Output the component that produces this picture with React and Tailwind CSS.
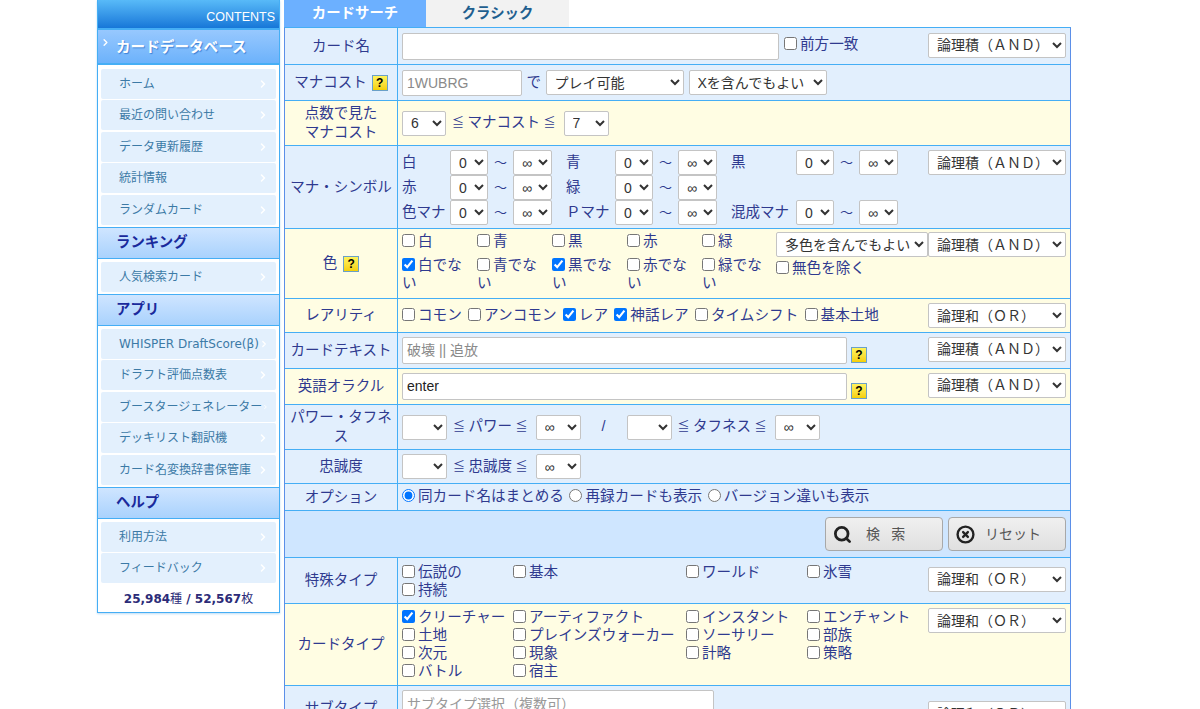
import { ChevronRight, Search, CircleX } from "lucide-react";

const JP = "font-['Liberation_Sans','Noto_Sans_CJK_JP',sans-serif]";
const blue = "bg-[#e2effd]";
const yellow = "bg-[#fffde3]";

const sections = [
  { title: "ランキング", items: ["人気検索カード"] },
  {
    title: "アプリ",
    items: [
      "WHISPER DraftScore(β)",
      "ドラフト評価点数表",
      "ブースタージェネレーター",
      "デッキリスト翻訳機",
      "カード名変換辞書保管庫",
    ],
  },
  { title: "ヘルプ", items: ["利用方法", "フィードバック"] },
];

function NavItem({ label }) {
  return (
    <div className="flex h-[30px] items-center justify-between rounded-[2px] bg-[#e3f0fd] pl-[18px] pr-[7px] text-[12px] text-[#3c7aa6]">
      <span className="whitespace-nowrap">{label}</span>
      <ChevronRight size={12} className="text-white" strokeWidth={3} />
    </div>
  );
}

function NavList({ items, top = "pt-[3px]" }) {
  return (
    <div className={`flex flex-col gap-[1.4px] px-[3px] pb-[2px] ${top}`}>
      {items.map((i) => (
        <NavItem key={i} label={i} />
      ))}
    </div>
  );
}

function Sidebar() {
  return (
    <div className="w-[183px] shrink-0 self-start border-x border-b border-[#45aef5] bg-white font-['DejaVu_Sans','Noto_Sans_CJK_JP',sans-serif] shadow-[0_1px_2px_#bcdcf5]">
      <div className="flex h-[28px] items-end justify-end bg-gradient-to-b from-[#58baf8] to-[#1677d8] pb-[1px] pr-[4px] font-['Liberation_Sans',sans-serif] text-[12.5px] text-white">
        CONTENTS
      </div>
      <div className="relative flex h-[37px] items-center border-y-2 border-[#45aef5] bg-gradient-to-b from-[#97c8fe] to-[#6cb2fb] pl-[18px] text-[14.6px] font-bold text-white [text-shadow:1px_1px_1px_#3b82d6]">
        <ChevronRight size={11} strokeWidth={3} className="absolute left-[2px] top-[7px] text-white" />
        カードデータベース
      </div>
      <NavList
        top="pt-[4px]"
        items={["ホーム", "最近の問い合わせ", "データ更新履歴", "統計情報", "ランダムカード"]}
      />
      {sections.map((s) => (
        <div key={s.title}>
          <div className="flex h-[32.2px] items-center border-y border-[#45aef5] bg-gradient-to-b from-[#cfe5ff] to-[#a9d2fd] pl-[18px] text-[14.4px] font-bold text-[#1a2a9c]">
            {s.title}
          </div>
          <NavList items={s.items} />
        </div>
      ))}
      <div className="flex h-[27px] items-center justify-center whitespace-nowrap text-[12px] font-bold text-[#2c2c78]">
        25,984<span className="font-normal">種</span>&nbsp;/&nbsp;52,567<span className="font-normal">枚</span>
      </div>
    </div>
  );
}

function Help() {
  return (
    <span className="inline-flex h-[16px] w-[16px] shrink-0 items-center justify-center border border-[#6aa0c8] bg-gradient-to-b from-[#fff45a] to-[#f5d000] text-[12px] font-bold leading-none text-black">
      ?
    </span>
  );
}

function Select({ w, value, options, className = "" }) {
  const opts = options ?? [value];
  return (
    <select
      defaultValue={value}
      style={{ width: w }}
      className={`h-[25px] shrink-0 rounded-[2px] border border-[#c4c4c4] bg-white pl-[4px] text-[14px] text-[#333] ${className}`}
    >
      {opts.map((o) => (
        <option key={o}>{o}</option>
      ))}
    </select>
  );
}

function Logic({ value = "論理積（ＡＮＤ）", className = "" }) {
  return <Select w={138} value={value} className={`ml-auto ${className}`} />;
}

function Check({ label, checked, type = "checkbox", name }) {
  return (
    <label className="pr-[2px] text-[14.6px]">
      <input
        type={type}
        name={name}
        defaultChecked={checked}
        className="mr-[3px] align-[-1px]"
      />
      {label}
    </label>
  );
}

function Row({ label, bg, h, labelBg, children, align = "items-center" }) {
  return (
    <div className={`flex border-b border-[#45aef5] ${bg}`} style={{ height: h }}>
      <div
        className={`flex w-[113px] shrink-0 items-center justify-center border-r border-[#45aef5] text-center leading-[19px] ${labelBg ?? ""}`}
      >
        {label}
      </div>
      <div className={`flex min-w-0 flex-1 pl-[4px] pr-[4px] ${align}`}>{children}</div>
    </div>
  );
}

function Le() {
  return <span className="text-[12px]">≦</span>;
}

function Between({ label }) {
  return (
    <span className="ml-[6px] mr-[8px] flex items-center gap-[3.5px] whitespace-nowrap">
      <Le />
      {label}
      <Le />
    </span>
  );
}

function Range({ a = "0", b = "∞" }) {
  return (
    <>
      <Select w={38} value={a} />
      <span className="w-[25px] text-center text-[13px]">～</span>
      <Select w={39} value={b} />
    </>
  );
}

function SymbolRow({ rows }) {
  return (
    <div className="flex h-[25px] items-center">
      {rows.map(([label, w, gap], i) => (
        <div key={label} className="flex items-center" style={{ marginLeft: i ? gap : 0 }}>
          <span className="whitespace-nowrap" style={{ width: w }}>
            {label}
          </span>
          <Range />
        </div>
      ))}
    </div>
  );
}

function CheckGrid({ cols, items }) {
  return (
    <div className="grid leading-[18px]" style={{ gridTemplateColumns: cols }}>
      {items.map(([l, c]) => (
        <Check key={l} label={l} checked={c} />
      ))}
    </div>
  );
}

function Tabs() {
  return (
    <div className="flex h-[27px] text-[14.4px] font-bold">
      <div className="flex w-[142px] items-center justify-center bg-[#6cb0ff] text-white">カードサーチ</div>
      <div className="flex w-[143px] items-center justify-center bg-[#f2f2f2] text-[#1f5f8f]">クラシック</div>
    </div>
  );
}

function ActionButton({ children, w }) {
  return (
    <button
      className="flex h-[34px] items-center rounded-[4px] border border-[#a8a8a8] bg-gradient-to-b from-[#f0f0f0] to-[#e0e0e0] pl-[7px] text-[14px] text-[#555]"
      style={{ width: w }}
    >
      {children}
    </button>
  );
}

export default function App() {
  return (
    <div className={`flex h-[709px] gap-[4px] overflow-hidden bg-white pl-[97px] text-[14.5px] text-[#2f3a8f] ${JP}`}>
      <Sidebar />
      <div className="w-[787px] shrink-0">
        <Tabs />
        <div className="border-x border-t border-x-[#5b8fe8] border-t-[#45aef5]">
          <Row label="カード名" bg={blue} h={37}>
            <input className="h-[27px] w-[377px] rounded-[2px] border border-[#c4c4c4] bg-white" />
            <span className="ml-[5px] -mt-[2px]">
              <Check label="前方一致" />
            </span>
            <Logic className="-mt-[2px]" />
          </Row>
          <Row
            label={
              <span className="flex items-center gap-[5px]">
                マナコスト <Help />
              </span>
            }
            bg={blue}
            h={36}
          >
            <input
              placeholder="1WUBRG"
              className="h-[26px] w-[120px] rounded-[2px] border border-[#c4c4c4] bg-white px-[4px] text-[14px] placeholder:text-[#8a8a8a]"
            />
            <span className="mx-[4.5px]">で</span>
            <Select w={138} value="プレイ可能" />
            <Select w={138} value="Xを含んでもよい" className="ml-[5px]" />
          </Row>
          <Row label={<>点数で見た<br />マナコスト</>} bg={yellow} h={45}>
            <Select w={44} value="6" />
            <Between label="マナコスト" />
            <Select w={45} value="7" />
          </Row>
          <Row label="マナ・シンボル" bg={blue} h={83} labelBg="whitespace-nowrap" align="items-start pt-[4px]">
            <div className="flex flex-col">
              <SymbolRow rows={[["白", 48, 0], ["青", 49, 14], ["黒", 65, 14]]} />
              <SymbolRow rows={[["赤", 48, 0], ["緑", 49, 14]]} />
              <SymbolRow rows={[["色マナ", 48, 0], ["Ｐマナ", 49, 14], ["混成マナ", 65, 14]]} />
            </div>
            <Logic />
          </Row>
          <Row
            label={
              <span className="flex items-center gap-[6px]">
                色 <Help />
              </span>
            }
            bg={yellow}
            h={70}
            align="items-start pt-[3px]"
          >
            <div className="w-[375px] shrink-0">
              <CheckGrid
                cols="repeat(5, 75px)"
                items={[["白"], ["青"], ["黒"], ["赤"], ["緑"]]}
              />
              <div className="mt-[6px]">
                <CheckGrid
                  cols="repeat(5, 75px)"
                  items={[["白でない", true], ["青でない"], ["黒でない", true], ["赤でない"], ["緑でない"]]}
                />
              </div>
            </div>
            <div className="-ml-[1px] flex flex-col">
              <Select w={152} value="多色を含んでもよい" />
              <span className="mt-[2px] leading-[18px]">
                <Check label="無色を除く" />
              </span>
            </div>
            <Logic />
          </Row>
          <Row label="レアリティ" bg={yellow} h={34}>
            <div className="flex gap-[4.3px] whitespace-nowrap">
              <Check label="コモン" />
              <Check label="アンコモン" />
              <Check label="レア" checked />
              <Check label="神話レア" checked />
              <Check label="タイムシフト" />
              <Check label="基本土地" />
            </div>
            <Logic value="論理和（ＯＲ）" />
          </Row>
          <Row label={<span className="whitespace-nowrap">カードテキスト</span>} bg={blue} h={36}>
            <input
              placeholder="破壊 || 追放"
              className="-mt-[1px] h-[27px] w-[445px] rounded-[2px] border border-[#c4c4c4] bg-white px-[4px] text-[14px] placeholder:text-[#8a8a8a]"
            />
            <span className="ml-[4px] mt-[8px]">
              <Help />
            </span>
            <Logic className="-mt-[3px]" />
          </Row>
          <Row label="英語オラクル" bg={yellow} h={36}>
            <input
              defaultValue="enter"
              className="-mt-[1px] h-[27px] w-[445px] rounded-[2px] border border-[#c4c4c4] bg-white px-[4px] text-[14px] text-[#222]"
            />
            <span className="ml-[4px] mt-[8px]">
              <Help />
            </span>
            <Logic className="-mt-[3px]" />
          </Row>
          <Row label="パワー・タフネス" bg={blue} h={45}>
            <Select w={45} value="" />
            <Between label="パワー" />
            <Select w={45} value="∞" />
            <span className="w-[46px] text-center">/</span>
            <Select w={45} value="" />
            <Between label="タフネス" />
            <Select w={45} value="∞" />
          </Row>
          <Row label="忠誠度" bg={blue} h={34}>
            <Select w={45} value="" />
            <Between label="忠誠度" />
            <Select w={45} value="∞" />
          </Row>
          <Row label="オプション" bg={blue} h={27}>
            <div className="flex gap-[3.5px] whitespace-nowrap">
              <Check type="radio" name="opt" label="同カード名はまとめる" checked />
              <Check type="radio" name="opt" label="再録カードも表示" />
              <Check type="radio" name="opt" label="バージョン違いも表示" />
            </div>
          </Row>
          <div className="flex h-[47px] items-center justify-end gap-[5px] border-b border-[#45aef5] bg-[#cfe6ff] pr-[4px]">
            <ActionButton w={118}>
              <Search size={19} strokeWidth={3.5} className="text-[#222]" />
              <span className="ml-[14px] tracking-[0.8em]">検索</span>
            </ActionButton>
            <ActionButton w={118}>
              <CircleX size={19} strokeWidth={3} className="text-[#222]" />
              <span className="ml-[10px]">リセット</span>
            </ActionButton>
          </div>
          <Row label="特殊タイプ" bg={blue} h={46}>
            <CheckGrid
              cols="111px 173px 121px 115px"
              items={[["伝説の"], ["基本"], ["ワールド"], ["氷雪"], ["持続"]]}
            />
            <Logic value="論理和（ＯＲ）" className="-mt-[3px]" />
          </Row>
          <Row label="カードタイプ" bg={yellow} h={82} align="items-start pt-[4px]">
            <CheckGrid
              cols="111px 173px 121px 115px"
              items={[
                ["クリーチャー", true], ["アーティファクト"], ["インスタント"], ["エンチャント"],
                ["土地"], ["プレインズウォーカー"], ["ソーサリー"], ["部族"],
                ["次元"], ["現象"], ["計略"], ["策略"],
                ["バトル"], ["宿主"],
              ]}
            />
            <Logic value="論理和（ＯＲ）" />
          </Row>
          <Row
            label={<span className="-mt-[4px]">サブタイプ</span>}
            bg={blue}
            h={50}
            align="items-start pt-[4px]"
          >
            <input
              placeholder="サブタイプ選択（複数可）"
              className="h-[27px] w-[312px] rounded-[2px] border border-[#c4c4c4] bg-white px-[4px] text-[14px] placeholder:text-[#999]"
            />
            <div className="ml-auto mt-[11px] flex w-[138px]">
              <Logic value="論理和（ＯＲ）" />
            </div>
          </Row>
        </div>
      </div>
    </div>
  );
}
